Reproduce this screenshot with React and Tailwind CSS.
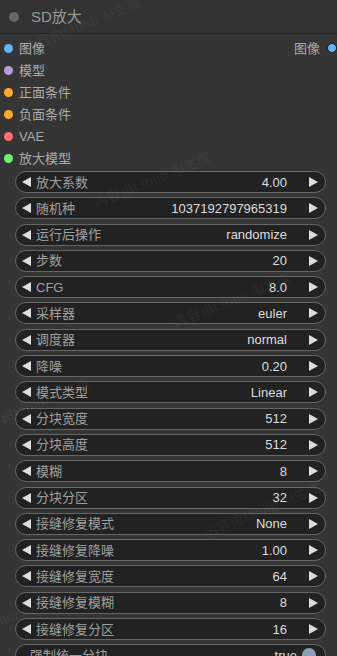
import React from "react";

const FONT = { fontFamily: '"Liberation Sans", "Noto Sans CJK SC", sans-serif' };

const inputs = [
  { label: "图像", color: "bg-[#64b5f6]" },
  { label: "模型", color: "bg-[#b39ddb]" },
  { label: "正面条件", color: "bg-[#ffa931]" },
  { label: "负面条件", color: "bg-[#ffa931]" },
  { label: "VAE", color: "bg-[#ff6e6e]" },
  { label: "放大模型", color: "bg-[#70f070]" },
];

const widgets = [
  ["放大系数", "4.00"],
  ["随机种", "1037192797965319"],
  ["运行后操作", "randomize"],
  ["步数", "20"],
  ["CFG", "8.0"],
  ["采样器", "euler"],
  ["调度器", "normal"],
  ["降噪", "0.20"],
  ["模式类型", "Linear"],
  ["分块宽度", "512"],
  ["分块高度", "512"],
  ["模糊", "8"],
  ["分块分区", "32"],
  ["接缝修复模式", "None"],
  ["接缝修复降噪", "1.00"],
  ["接缝修复宽度", "64"],
  ["接缝修复模糊", "8"],
  ["接缝修复分区", "16"],
];

function Left() {
  return (
    <svg width="9" height="10" viewBox="0 0 9 10" className="shrink-0">
      <polygon points="9,0 0,5 9,10" fill="#dddddd" />
    </svg>
  );
}
function Right() {
  return (
    <svg width="9" height="10" viewBox="0 0 9 10" className="shrink-0">
      <polygon points="0,0 9,5 0,10" fill="#dddddd" />
    </svg>
  );
}

function Widget({ label, value }) {
  return (
    <div className="ml-[15px] w-[311px] h-[22px] shrink-0 rounded-full border border-[#666] bg-[#222] flex items-center pl-[6px] pr-[7px] text-[13px] leading-none">
      <Left />
      <span className="ml-[5px] text-[#a0a0a0] whitespace-nowrap">{label}</span>
      <span className="flex-1 text-right text-[#dddddd] whitespace-nowrap mr-[22px]">{value}</span>
      <Right />
    </div>
  );
}

const marks = [
  { x: 20, y: 15 },
  { x: 90, y: 170 },
  { x: 170, y: 290 },
  { x: -30, y: 395 },
  { x: 200, y: 500 },
  { x: -60, y: 610 },
];

export default function App() {
  return (
    <div className="relative w-[337px] h-[656px] overflow-hidden bg-[#353535]" style={FONT}>
      <div className="h-[34px] flex items-center border-b border-[#282828] bg-[#333333]">
        <div className="ml-[9px] w-[10px] h-[10px] rounded-full bg-[#666666]" />
        <span className="ml-[12px] text-[15px] text-[#999999] leading-none">SD放大</span>
      </div>
      <div className="pt-[3px] flex flex-col">
        {inputs.map((s, i) => (
          <div key={i} className="h-[22px] flex items-center text-[13px] leading-none">
            <div className={`ml-[4px] w-[9px] h-[9px] rounded-full ${s.color}`} />
            <span className="ml-[6px] text-[#aaaaaa]">{s.label}</span>
            {i === 0 && (
              <div className="ml-auto flex items-center">
                <span className="text-[#aaaaaa]">图像</span>
                <div className="ml-[7px] w-[10px] h-[10px] rounded-full bg-[#64b5f6] border border-[#1a1a1a]" />
              </div>
            )}
          </div>
        ))}
      </div>
      <div className="pt-[2px] flex flex-col gap-[4.3px]">
        {widgets.map(([l, v]) => (
          <Widget key={l} label={l} value={v} />
        ))}
        <div className="ml-[15px] w-[311px] h-[22px] shrink-0 rounded-full border border-[#666] bg-[#222] flex items-center pl-[14px] pr-[9px] text-[13px] leading-none">
          <span className="text-[#a0a0a0] whitespace-nowrap">强制统一分块</span>
          <span className="flex-1 text-right text-[#dddddd]">true</span>
          <div className="ml-[5px] w-[14px] h-[14px] rounded-full bg-[#8b9cb3]" />
        </div>
      </div>
      {marks.map((m, i) => (
        <span
          key={i}
          className="absolute pointer-events-none whitespace-nowrap text-[14px] text-white/[0.04] font-bold -rotate-[22deg]"
          style={{ left: m.x, top: m.y }}
        >
          内容由Liblib AI生成
        </span>
      ))}
    </div>
  );
}
